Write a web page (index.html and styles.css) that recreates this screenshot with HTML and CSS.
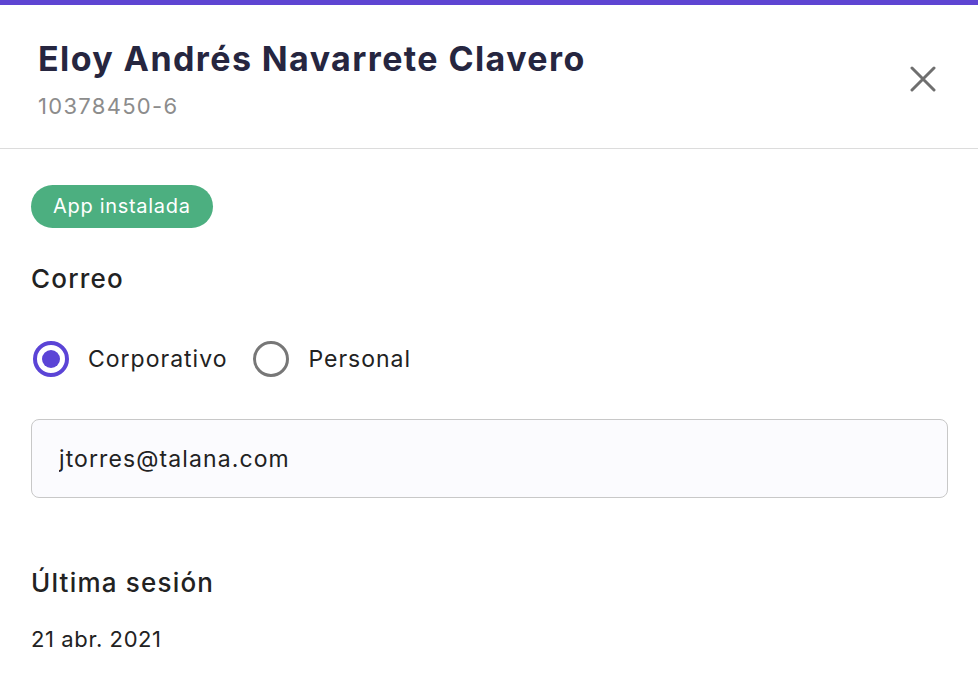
FILE: index.html
```html
<!DOCTYPE html>
<html lang="es">
<head>
    <meta charset="UTF-8">
    <meta name="viewport" content="width=device-width, initial-scale=1.0">
    <title>Eloy Andrés Navarrete Clavero</title>
    <link rel="stylesheet" href="styles.css">
</head>
<body>

<div class="panel">
    <div class="panel-header">
        <div class="who">
            <h1 class="name">Eloy Andrés Navarrete Clavero</h1>
            <div class="rut">10378450-6</div>
        </div>
        <button class="close" aria-label="Cerrar">
            <svg width="26" height="26" viewBox="0 0 26 26">
                <path d="M2 2 L24 24 M24 2 L2 24" stroke="#6f6f6f" stroke-width="3" stroke-linecap="round"/>
            </svg>
        </button>
    </div>

    <div class="panel-body">
        <span class="badge">App instalada</span>

        <h3 class="section-title">Correo</h3>

        <div class="radios">
            <label class="radio">
                <input type="radio" name="mail" checked>
                <span class="dot"></span>
                Corporativo
            </label>
            <label class="radio">
                <input type="radio" name="mail">
                <span class="dot"></span>
                Personal
            </label>
        </div>

        <input class="field" type="text" value="jtorres@talana.com">

        <h3 class="section-title last-session">Última sesión</h3>
        <div class="date">21 abr. 2021</div>
    </div>
</div>

</body>
</html>
```

FILE: styles.css
```css
body {
    margin: 0;
    font-family: Inter, "Noto Sans", sans-serif;
    background-color: #fff;
    color: #222;
}

.panel {
    border-top: 5px solid #5e45d2;
}

.panel-header {
    display: flex;
    align-items: center;
    justify-content: space-between;
    padding: 34px 42px 28px 38px;
    border-bottom: 1px solid #dcdcdc;
}

.name {
    margin: 0;
    font-size: 34px;
    font-weight: 700;
    letter-spacing: 1.4px;
    color: #262640;
    line-height: 40px;
}

.rut {
    margin-top: 13px;
    font-size: 22px;
    letter-spacing: 1.3px;
    color: #8c8c8c;
    line-height: 28px;
}

.close {
    background: none;
    border: none;
    padding: 0;
    cursor: pointer;
    display: flex;
    margin-top: -2px;
}

.panel-body {
    padding: 36px 30px 0 31px;
}

.badge {
    display: inline-block;
    background-color: #4caf80;
    color: #fff;
    font-size: 20px;
    letter-spacing: 0.7px;
    line-height: 43px;
    padding: 0 22px;
    border-radius: 22px;
}

.section-title {
    margin: 34px 0 0;
    font-size: 26px;
    font-weight: 500;
    letter-spacing: 1.2px;
    line-height: 34px;
    color: #222;
}

.radios {
    display: flex;
    gap: 26px;
    margin-top: 45px;
    padding-left: 2px;
}

.radio {
    display: flex;
    align-items: center;
    gap: 19px;
    font-size: 23px;
    letter-spacing: 1px;
    color: #222;
    cursor: pointer;
}

.radio input {
    display: none;
}

.dot {
    width: 36px;
    height: 36px;
    box-sizing: border-box;
    border: 3px solid #777;
    border-radius: 50%;
    display: flex;
    align-items: center;
    justify-content: center;
}

.radio input:checked + .dot {
    border: 4px solid #5b44d6;
}

.radio input:checked + .dot::after {
    content: "";
    width: 18px;
    height: 18px;
    border-radius: 50%;
    background-color: #5b44d6;
}

.field {
    display: block;
    width: 100%;
    box-sizing: border-box;
    margin-top: 42px;
    height: 79px;
    padding: 0 27px;
    font-family: Inter, "Noto Sans", sans-serif;
    font-size: 23px;
    letter-spacing: 1.1px;
    color: #222;
    background-color: #fbfbfe;
    border: 1px solid #c8c8c8;
    border-radius: 8px;
    outline: none;
}

.last-session {
    margin-top: 68px;
}

.date {
    margin-top: 26px;
    font-size: 22px;
    letter-spacing: 0.6px;
    color: #222;
}
```
